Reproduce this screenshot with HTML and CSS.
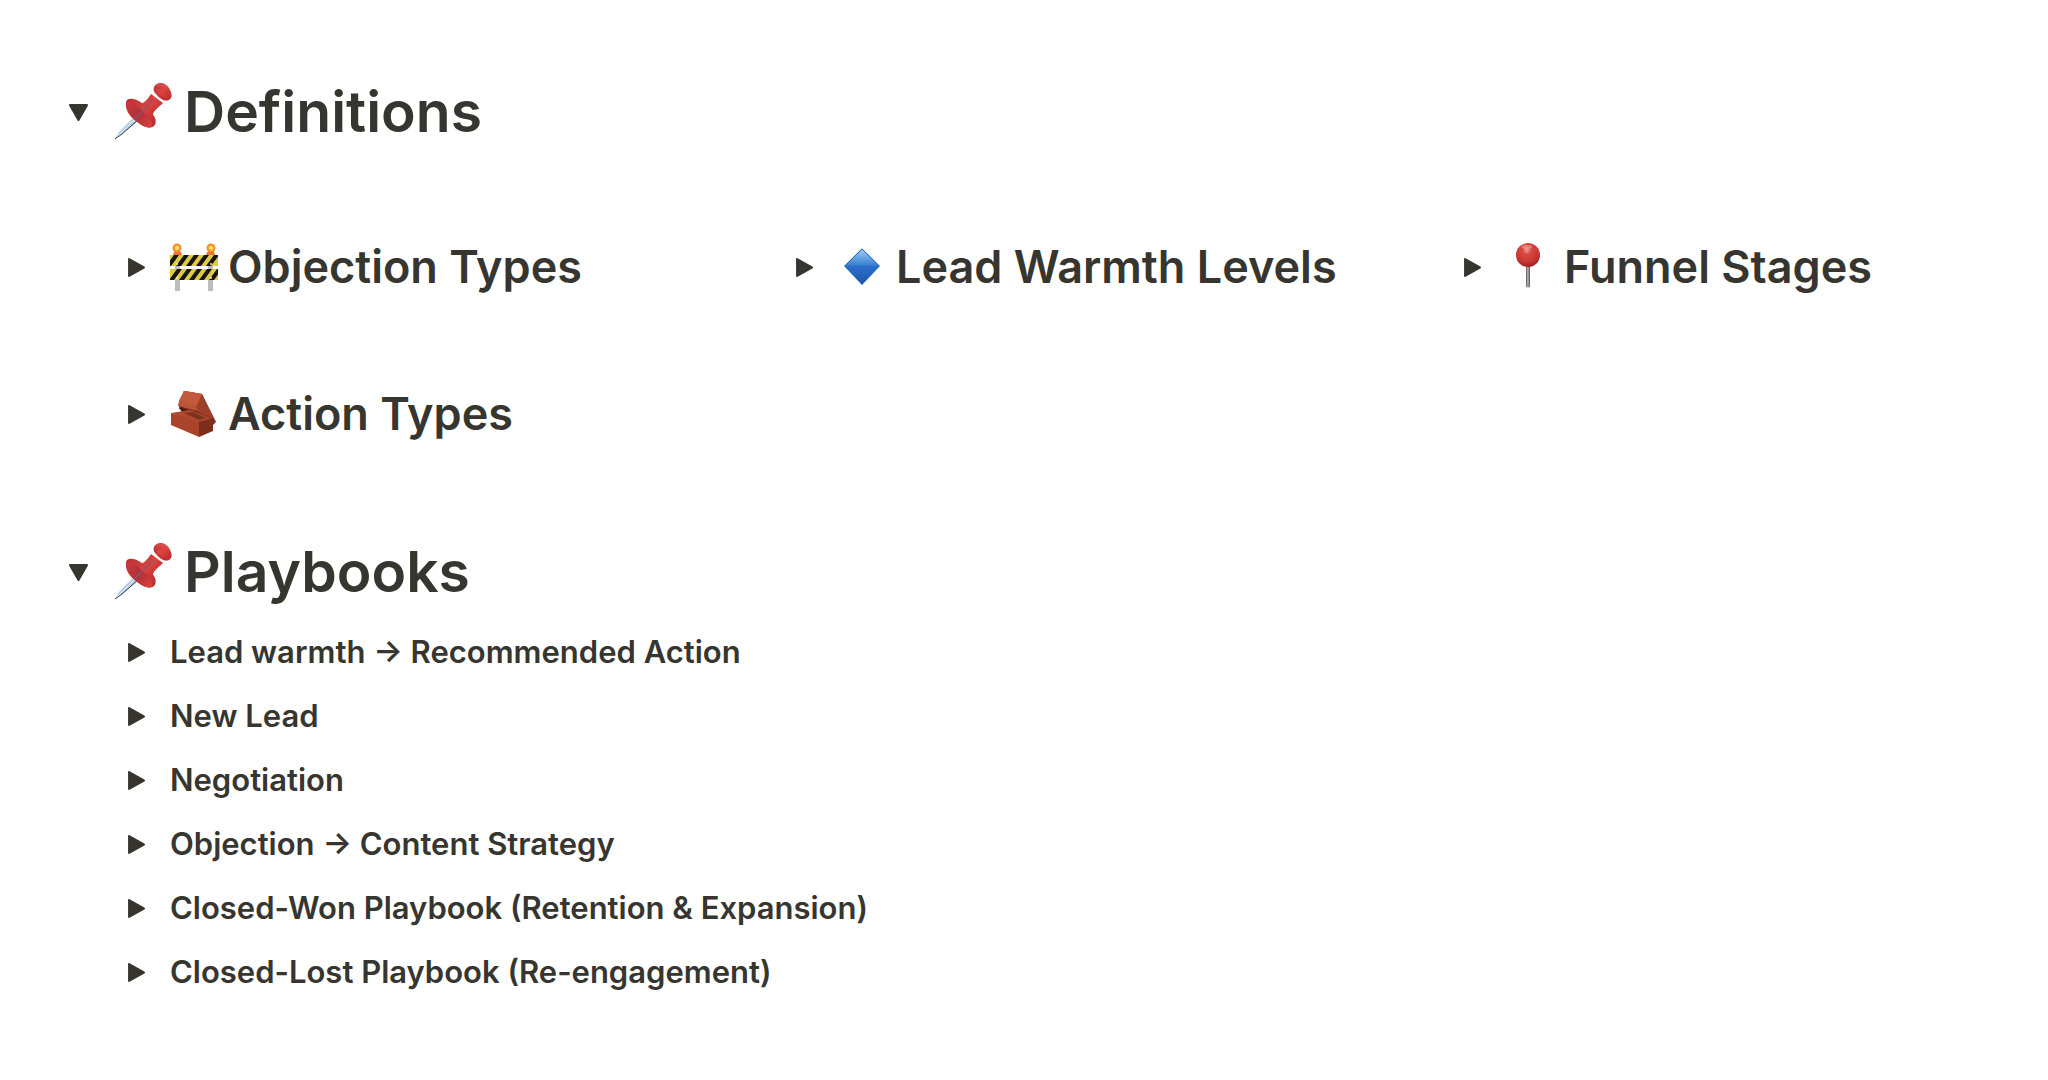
FILE: index.html
```html
<!DOCTYPE html>
<html lang="en">
<head>
<meta charset="utf-8">
<meta name="viewport" content="width=device-width, initial-scale=1">
<title>Definitions and Playbooks</title>
<link rel="stylesheet" href="styles.css">
</head>
<body>
<svg class="defs" aria-hidden="true">
  <defs>
    <linearGradient id="pinBody" x1="0" y1="0" x2="1" y2="1">
      <stop offset="0" stop-color="#b52f33"/><stop offset=".45" stop-color="#dc4440"/><stop offset="1" stop-color="#b9282c"/>
    </linearGradient>
    <linearGradient id="pinDisc" x1="0" y1="0" x2="1" y2="1">
      <stop offset="0" stop-color="#cf3a3b"/><stop offset=".5" stop-color="#ad3139"/><stop offset="1" stop-color="#e0423b"/>
    </linearGradient>
    <linearGradient id="diamond" x1="0" y1="0" x2="0" y2="1">
      <stop offset="0" stop-color="#a5d3fa"/><stop offset=".45" stop-color="#3d83d4"/><stop offset=".5" stop-color="#2a6fc9"/><stop offset="1" stop-color="#1d54ab"/>
    </linearGradient>
    <radialGradient id="ball" cx=".45" cy=".3" r=".7">
      <stop offset="0" stop-color="#f0a096"/><stop offset=".25" stop-color="#d84a42"/><stop offset=".7" stop-color="#c93631"/><stop offset="1" stop-color="#982224"/>
    </radialGradient>
    <linearGradient id="stick" x1="0" y1="0" x2="1" y2="0">
      <stop offset="0" stop-color="#555"/><stop offset=".45" stop-color="#bdb8b4"/><stop offset="1" stop-color="#554f4c"/>
    </linearGradient>
    <radialGradient id="lamp">
      <stop offset="0" stop-color="#fff3a0"/><stop offset=".4" stop-color="#ffd04b"/><stop offset=".65" stop-color="#f79326"/><stop offset="1" stop-color="#f28a2c"/>
    </radialGradient>
    <linearGradient id="brickTop" x1="0" y1="0" x2="1" y2="1">
      <stop offset="0" stop-color="#c65b3b"/><stop offset="1" stop-color="#b04a2d"/>
    </linearGradient>
    <clipPath id="boards"><path d="M0 12h48v11H0zM0 26h48v11H0z"/></clipPath>
    <symbol id="caret" viewBox="1 1 16 18"><path d="M2 2v16L16 10z" fill="currentColor" stroke="currentColor" stroke-width="2" stroke-linejoin="round"/></symbol>
    <symbol id="pushpin" viewBox="0 0 60 60">
      <path d="M3 57L7 50 23 34 27 38 10 52z" fill="#b4c9e4"/>
      <path d="M5 55L24 36" stroke="#e9f3fc" stroke-width="1"/>
      <path d="M3 57L10 52 26 38" stroke="#333c4b" stroke-width="1" fill="none"/>
      <path d="M14 21c0-6 9-5 16 0l9 9c5 5 6 11 3 14-5 4-12 0-18-5-7-5-11-12-10-18z" fill="url(#pinBody)"/>
      <path d="M15 21c3-3 8 0 14 6s12 13 11 17c-4 3-10 0-16-5s-11-12-9-18z" fill="url(#pinDisc)"/>
      <path d="M27 23c5-2 9-6 12-11l12 9c-4 4-8 6-10 11-2 3-6 1-9-2-3-2-5-4-5-7z" fill="url(#pinBody)"/>
      <path d="M42 5c3-6 11-5 15 1 3 5 4 10 0 12-5 2-10-2-13-6-2-2-3-4-2-7z" fill="url(#pinBody)"/>
      <path d="M43 4c4-4 10-2 13 2-4-1-8-1-13-2z" fill="#db4b48"/>
      <path d="M22 37l8-7 11-12" stroke="#94506e" stroke-width="2" fill="none" opacity=".75"/>
      <path d="M42 8c3 4 8 8 13 10" stroke="#a9262a" stroke-width="1" fill="none" opacity=".7"/>
    </symbol>
    <symbol id="barrier" viewBox="0 0 48 48">
      <path d="M5 20h5v28H5zM38 20h5v28h-5z" fill="#bdbdbf"/>
      <path d="M3 12l1-3h7l1 3zM36 12l1-3h7l1 3z" fill="#ee6f32"/>
      <circle cx="7" cy="5" r="4.5" fill="url(#lamp)"/><circle cx="41" cy="5" r="4.5" fill="url(#lamp)"/>
      <g clip-path="url(#boards)">
        <path d="M0 12h48v25H0z" fill="#dfca45"/>
        <path d="M-4 23l8-11h5L1 23zM6 23l8-11h5l-8 11zM16 23l8-11h5l-8 11zM26 23l8-11h5l-8 11zM36 23l8-11h5l-8 11zM-1 37l8-11h5L4 37zM9 37l8-11h5l-8 11zM19 37l8-11h5l-8 11zM29 37l8-11h5l-8 11zM39 37l8-11h5l-8 11z" fill="#17150f"/>
      </g>
      <g fill="#eee"><circle cx="7" cy="21" r="1"/><circle cx="41" cy="21" r="1"/><circle cx="7" cy="35" r="1"/><circle cx="41" cy="35" r="1"/></g>
    </symbol>
    <symbol id="rhombus" viewBox="0 0 48 48"><path d="M24 5L42 23 24 42 6 23z" fill="url(#diamond)"/><path d="M7 23L24 6l17 17" fill="none" stroke="#2e69ad" stroke-width="1"/></symbol>
    <symbol id="roundpin" viewBox="0 0 48 48"><path d="M20 20h4v23c0 2-4 2-4 0z" fill="url(#stick)"/><circle cx="22" cy="12" r="12" fill="url(#ball)"/><ellipse cx="21" cy="4" rx="5" ry="2" fill="#efb0a8" opacity=".55"/></symbol>
    <symbol id="brick" viewBox="0 0 48 48">
      <path d="M14 1l18 3 12 24 2 4-3 3-16-9-18-7z" fill="#7c2c19"/>
      <path d="M14 1l18 3-7 16-15-4z" fill="url(#brickTop)"/>
      <path d="M14 1L9 11l-1 5 20 5 4-17z" fill="#b95637"/>
      <path d="M14 1l18 3-5 11-18-4z" fill="#c25b3b"/>
      <path d="M32 4l12 25-16-7-2-5z" fill="#9c4128"/>
      <path d="M9 16l18 9-6 2-9-4z" fill="#4c1b12"/>
      <path d="M1 23l19-3 23 9-14 6z" fill="#ae4b2f"/>
      <path d="M1 23l28 9v15L1 35z" fill="#a9442a"/>
      <path d="M29 32l14-4v13l-14 6z" fill="#7e2d1b"/>
      <path d="M14 23l9-1 13 6-7 2z" fill="#7d3320"/>
    </symbol>
  </defs>
</svg>

<main class="page">
  <details class="toggle" open>
    <summary class="row row-large"><span class="marker"><svg class="caret caret-open"><use href="#caret"/></svg></span><svg class="emoji" aria-hidden="true"><use href="#pushpin"/></svg><h1 class="title">Definitions</h1></summary>
    <div class="content columns">
      <details class="toggle"><summary class="row row-medium"><span class="marker"><svg class="caret"><use href="#caret"/></svg></span><svg class="emoji" aria-hidden="true"><use href="#barrier"/></svg><h2 class="title">Objection Types</h2></summary></details>
      <details class="toggle"><summary class="row row-medium"><span class="marker"><svg class="caret"><use href="#caret"/></svg></span><svg class="emoji" aria-hidden="true"><use href="#rhombus"/></svg><h2 class="title">Lead Warmth Levels</h2></summary></details>
      <details class="toggle"><summary class="row row-medium"><span class="marker"><svg class="caret"><use href="#caret"/></svg></span><svg class="emoji" aria-hidden="true"><use href="#roundpin"/></svg><h2 class="title">Funnel Stages</h2></summary></details>
      <details class="toggle"><summary class="row row-medium"><span class="marker"><svg class="caret"><use href="#caret"/></svg></span><svg class="emoji" aria-hidden="true"><use href="#brick"/></svg><h2 class="title">Action Types</h2></summary></details>
    </div>
  </details>

  <details class="toggle" open>
    <summary class="row row-large"><span class="marker"><svg class="caret caret-open"><use href="#caret"/></svg></span><svg class="emoji" aria-hidden="true"><use href="#pushpin"/></svg><h1 class="title">Playbooks</h1></summary>
    <div class="content list">
      <details class="toggle"><summary class="row row-small"><span class="marker"><svg class="caret"><use href="#caret"/></svg></span><span class="title">Lead warmth → Recommended Action</span></summary></details>
      <details class="toggle"><summary class="row row-small"><span class="marker"><svg class="caret"><use href="#caret"/></svg></span><span class="title">New Lead</span></summary></details>
      <details class="toggle"><summary class="row row-small"><span class="marker"><svg class="caret"><use href="#caret"/></svg></span><span class="title">Negotiation</span></summary></details>
      <details class="toggle"><summary class="row row-small"><span class="marker"><svg class="caret"><use href="#caret"/></svg></span><span class="title">Objection → Content Strategy</span></summary></details>
      <details class="toggle"><summary class="row row-small"><span class="marker"><svg class="caret"><use href="#caret"/></svg></span><span class="title">Closed-Won Playbook (Retention &amp; Expansion)</span></summary></details>
      <details class="toggle"><summary class="row row-small"><span class="marker"><svg class="caret"><use href="#caret"/></svg></span><span class="title">Closed-Lost Playbook (Re-engagement)</span></summary></details>
    </div>
  </details>
</main>
</body>
</html>
```
FILE: styles.css
```css
* {
  box-sizing: border-box;
}

body {
  margin: 0;
  background: #fff;
  color: #37352f;
  font-family: Inter, "Liberation Sans", sans-serif;
  font-weight: 600;
}

.defs {
  display: block;
  width: 0;
  height: 0;
}

.page {
  display: flex;
  flex-direction: column;
  gap: 88px;
  padding: 73px 24px 40px 54px;
}

.row {
  display: flex;
  align-items: center;
  list-style: none;
  cursor: pointer;
}

.row::-webkit-details-marker {
  display: none;
}

.marker {
  display: flex;
  flex: none;
  justify-content: center;
  width: 48px;
  margin-right: 10px;
}

.caret {
  width: 17px;
  height: 19px;
}

.caret-open {
  transform: rotate(90deg);
}

.emoji {
  flex: none;
}

.title {
  margin: 0;
  font-size: inherit;
  font-weight: inherit;
}

.row-large {
  font-size: 57px;
  line-height: 78px;
}

.row-large .emoji {
  width: 60px;
  height: 60px;
  margin-right: 12px;
}

.row-medium {
  font-size: 45px;
  line-height: 62px;
}

.row-medium .emoji {
  width: 48px;
  height: 48px;
  margin-right: 10px;
}

.row-small {
  font-size: 31px;
  line-height: 64px;
}

.content {
  margin-left: 58px;
}

.columns {
  display: grid;
  grid-template-columns: repeat(3, 1fr);
  gap: 85px 92px;
  margin-top: 85px;
}

.list {
  margin-top: 9px;
}
```
